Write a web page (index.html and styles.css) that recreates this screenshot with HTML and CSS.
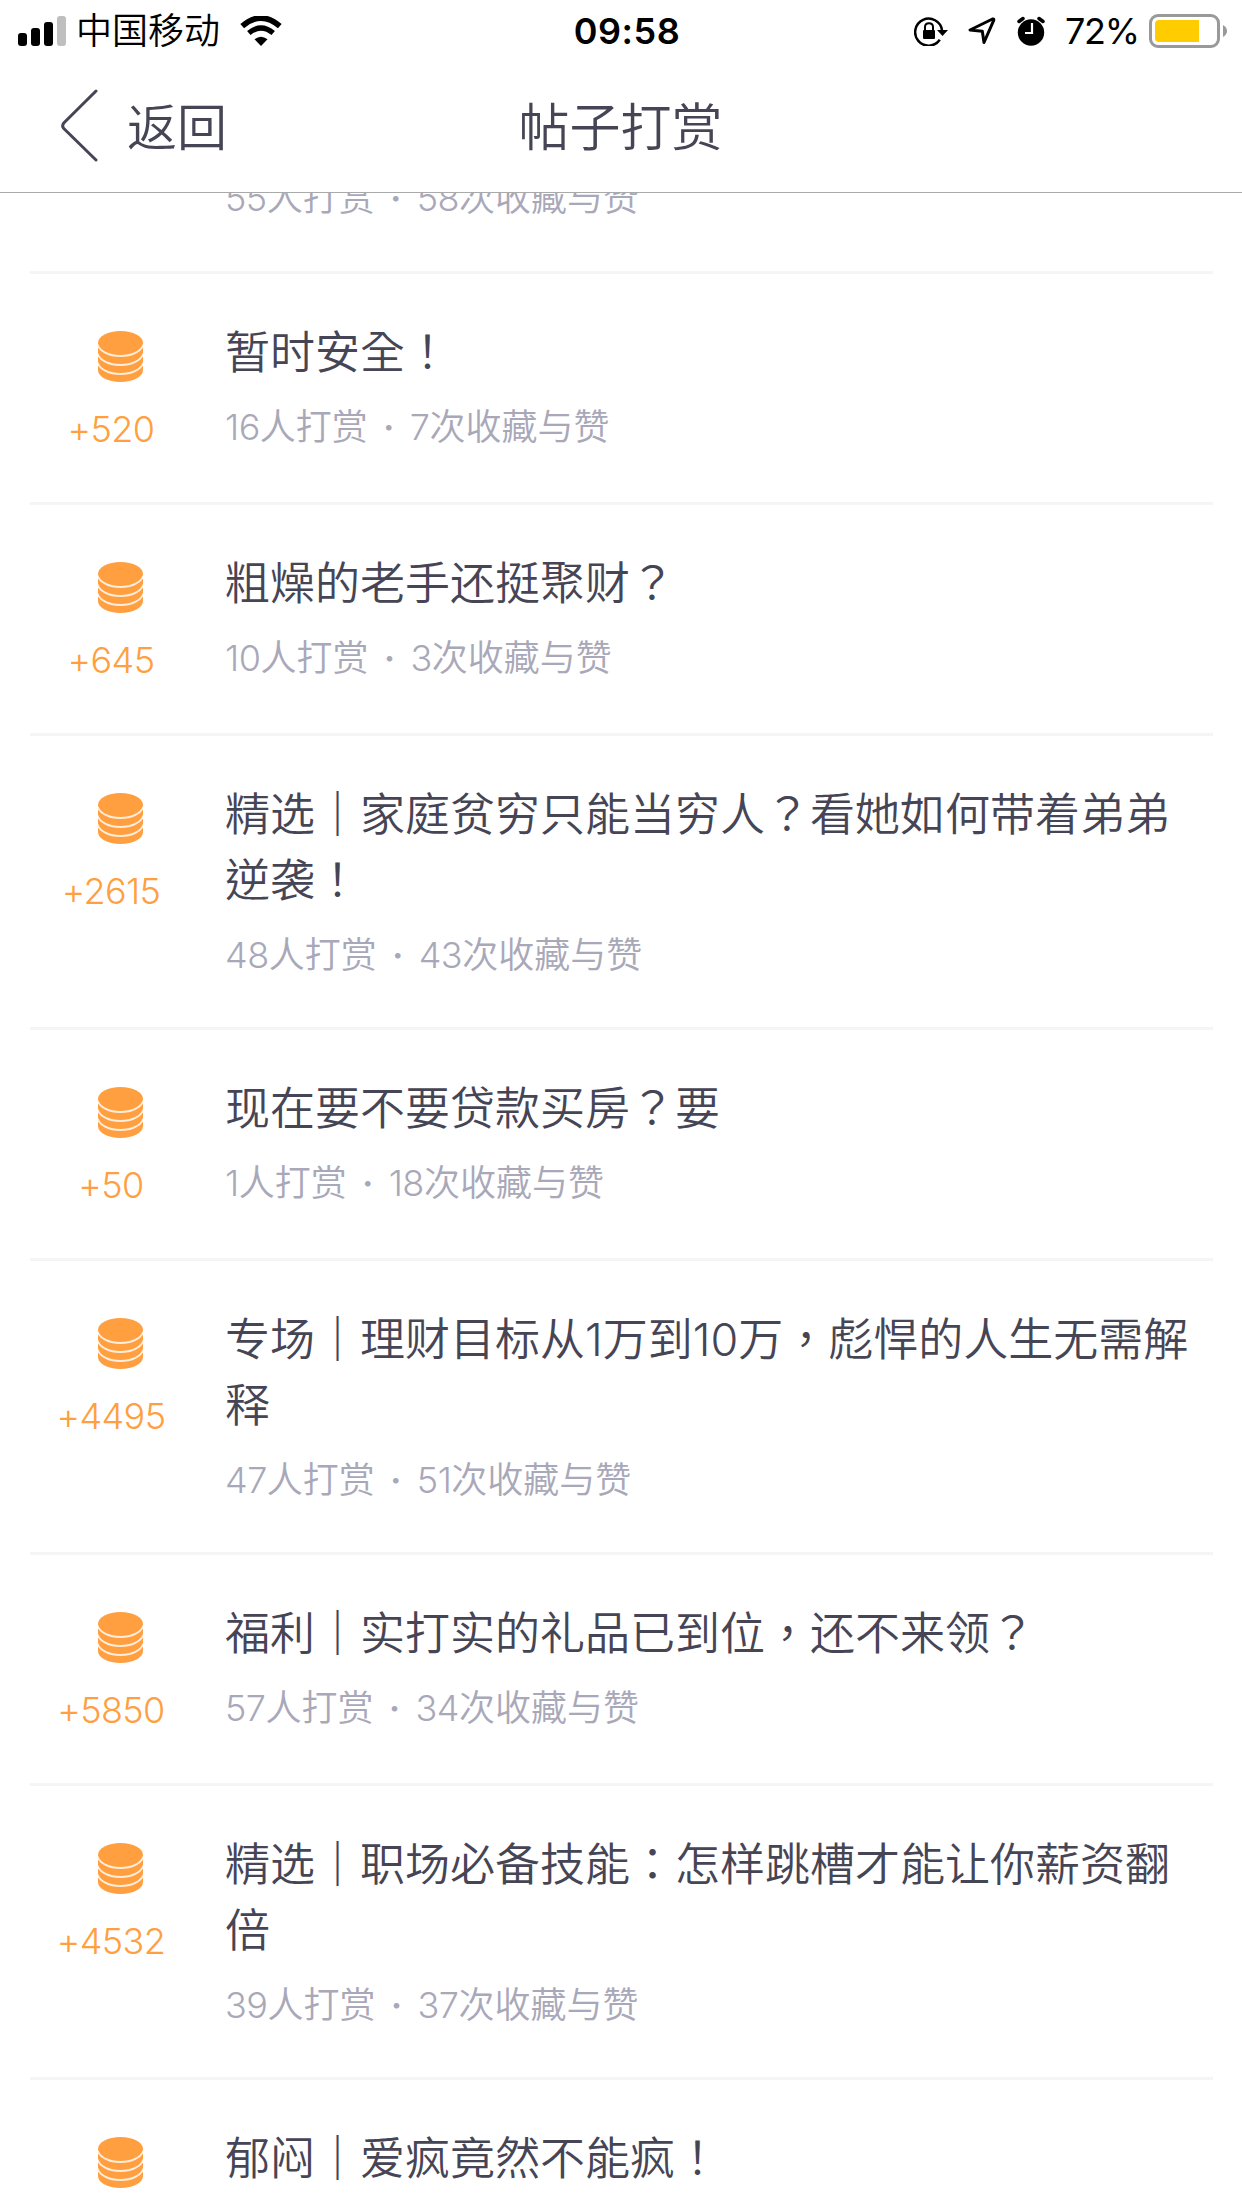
FILE: index.html
```html
<!DOCTYPE html>
<html lang="zh-CN">
<head>
<meta charset="utf-8">
<title>帖子打赏</title>
<link rel="stylesheet" href="styles.css">
</head>
<body>
<svg class="defs" width="0" height="0" aria-hidden="true">
  <symbol id="coins" viewBox="0 0 45 51">
    <path d="M0 12C0 5.400 10 0 22.500 0S45 5.400 45 12V39C45 45.600 35 51 22.500 51S0 45.600 0 39Z" fill="#ff9f40"/>
    <path d="M-.5 13.500C2 20.500 11 25 22.500 25S43 20.500 45.500 13.500M-.5 22.500C2 29.500 11 34 22.500 34S43 29.500 45.500 22.500M-.5 31.500C2 38.500 11 43 22.500 43S43 38.500 45.500 31.500" fill="none" stroke="#ffeedd" stroke-width="1.900"/>
  </symbol>
</svg>
<div class="screen">
  <div class="status">
    <div class="status-left">
      <svg class="signal" width="48" height="30" viewBox="0 0 48 30"><rect y="17" width="9" height="13" rx="3"/><rect x="13" y="12" width="9" height="18" rx="3"/><rect x="26" y="6" width="9" height="24" rx="3"/><rect x="39" width="9" height="30" rx="3" fill="#bfbfbf"/></svg>
      <span class="carrier">中国移动</span>
      <svg class="wifi" width="42" height="30" viewBox="0 0 42 30"><path d="M2.200 10.200Q21-6.200 39.800 10.200" fill="none" stroke="#000" stroke-width="5.600"/><path d="M8.800 17Q21 7 33.200 17" fill="none" stroke="#000" stroke-width="5.400"/><path d="M14.500 23.300Q21 18 27.500 23.300L21 30Z"/></svg>
    </div>
    <span class="time">09:58</span>
    <div class="status-right">
      <svg class="lock" width="34" height="30" viewBox="0 0 34 30"><path d="M25.800 23.800A13.500 13.500 0 1 1 28 14" fill="none" stroke="#000" stroke-width="2.500"/><path d="M23 14H34L28.500 20Z"/><rect x="9" y="14" width="12" height="9" rx="1"/><path d="M11 14V11Q11 7.200 15 7.200T19 11V14" fill="none" stroke="#000" stroke-width="2"/></svg>
      <svg class="arrow" width="28" height="28" viewBox="0 0 28 28"><path d="M2 13L24.500 2Q26.200 1.500 25.700 3.400L16 25.500L14.300 14.200Z" fill="none" stroke="#000" stroke-width="3" stroke-linejoin="round"/></svg>
      <svg class="alarm" width="28" height="30" viewBox="0 0 28 30"><circle cx="14" cy="16.500" r="13.200"/><path d="M2 5.500L6 2.500M22 2.500L26 5.500" stroke="#000" stroke-width="3.500" stroke-linecap="round"/><path d="M15 7V17H8" fill="none" stroke="#fff" stroke-width="2.200"/></svg>
      <span class="percent">72%</span>
      <svg class="battery" width="78" height="34" viewBox="0 0 78 34"><rect x="1.500" y="1.500" width="68" height="31" rx="7.500" fill="none" stroke="#999" stroke-width="3"/><path d="M10 6H50V28H10Q6 28 6 24V10Q6 6 10 6Z" fill="#fc0"/><path d="M74 11Q78 13.500 78 17T74 23Z" fill="#999"/></svg>
    </div>
  </div>
  <header class="nav">
    <div class="back"><svg width="37" height="74" viewBox="0 0 37 74"><path d="M35 2L2.800 34Q.5 37 2.800 39.500L35 71" fill="none" stroke="#464555" stroke-width="3" stroke-linecap="round"/></svg><span>返回</span></div>
    <h1>帖子打赏</h1>
  </header>
  <main class="list">
    <article class="row partial"><div class="body"><p class="meta"><b>55</b>人打赏<i>·</i><b>58</b>次收藏与赞</p></div></article>
    <article class="row"><div class="coin"><svg><use href="#coins"/></svg><span>+520</span></div><div class="body"><h2 lang="zh-TW">暂时安全！</h2><p class="meta"><b>16</b>人打赏<i>·</i><b>7</b>次收藏与赞</p></div></article>
    <article class="row"><div class="coin"><svg><use href="#coins"/></svg><span>+645</span></div><div class="body"><h2 lang="zh-TW">粗燥的老手还挺聚财？</h2><p class="meta"><b>10</b>人打赏<i>·</i><b>3</b>次收藏与赞</p></div></article>
    <article class="row"><div class="coin"><svg><use href="#coins"/></svg><span>+2615</span></div><div class="body"><h2 lang="zh-TW">精选<em>｜</em>家庭贫穷只能当穷人？看她如何带着弟弟逆袭！</h2><p class="meta"><b>48</b>人打赏<i>·</i><b>43</b>次收藏与赞</p></div></article>
    <article class="row"><div class="coin"><svg><use href="#coins"/></svg><span>+50</span></div><div class="body"><h2 lang="zh-TW">现在要不要贷款买房？要</h2><p class="meta"><b>1</b>人打赏<i>·</i><b>18</b>次收藏与赞</p></div></article>
    <article class="row"><div class="coin"><svg><use href="#coins"/></svg><span>+4495</span></div><div class="body"><h2 lang="zh-TW">专场<em>｜</em>理财目标从1万到10万，彪悍的人生无需解释</h2><p class="meta"><b>47</b>人打赏<i>·</i><b>51</b>次收藏与赞</p></div></article>
    <article class="row"><div class="coin"><svg><use href="#coins"/></svg><span>+5850</span></div><div class="body"><h2 lang="zh-TW">福利<em>｜</em>实打实的礼品已到位，还不来领？</h2><p class="meta"><b>57</b>人打赏<i>·</i><b>34</b>次收藏与赞</p></div></article>
    <article class="row"><div class="coin"><svg><use href="#coins"/></svg><span>+4532</span></div><div class="body"><h2 lang="zh-TW">精选<em>｜</em>职场必备技能：怎样跳槽才能让你薪资翻倍</h2><p class="meta"><b>39</b>人打赏<i>·</i><b>37</b>次收藏与赞</p></div></article>
    <article class="row"><div class="coin"><svg><use href="#coins"/></svg></div><div class="body"><h2 lang="zh-TW">郁闷<em>｜</em>爱疯竟然不能疯！</h2></div></article>
  </main>
</div>
</body>
</html>
```
FILE: styles.css
```css
* { box-sizing: border-box; }
body, h1, h2, p { margin: 0; }
body { background: #fff; color: #464555; font-family: Inter, "Noto Sans CJK SC", sans-serif; font-weight: 350; }
b, i, em { font-weight: inherit; font-style: normal; }
svg { display: block; flex: none; }
.defs { position: absolute; }
.screen { width: 1242px; height: 2208px; overflow: hidden; display: flex; flex-direction: column; }

.status { height: 60px; flex: none; display: grid; grid-template-columns: 1fr auto 1fr; padding: 0 15px 0 18px; color: #000; font-size: 36px; line-height: 60px; font-weight: 400; }
.status-left, .status-right { display: flex; align-items: center; }
.status-right { justify-content: flex-end; }
.carrier { margin: -5px 20px 0 10px; line-height: 60px; font-family: "Noto Sans CJK SC", sans-serif; font-weight: 350; }
.time { font-weight: 600; padding: 1px 0 0 5px; letter-spacing: .5px; margin-right: -4px; }
.lock { margin-right: 20px; }
.arrow { margin-right: 21px; }
.alarm { margin-right: 20px; }
.percent { font-family: Inter, sans-serif; margin-right: 10px; font-weight: 400; padding-top: 1px; letter-spacing: -1.2px; }

.nav { height: 133px; flex: none; border-bottom: 1px solid #aaa; display: grid; grid-template-columns: 1fr auto 1fr; align-items: center; font-family: "Noto Sans CJK SC", sans-serif; }
.nav h1 { font-size: 51px; font-weight: 350; line-height: 74px; margin: -4px 0 0 -1px; }
.back { display: flex; align-items: center; gap: 29px; padding-left: 61px; line-height: 74px; font-size: 50px; }
.back span { margin-top: -4px; }

.list { flex: 1; min-height: 0; overflow: hidden; padding: 0 29px 0 30px; }
.row { display: flex; gap: 30px; min-height: 231px; border-bottom: 3px solid #f5f5f5; padding: 46px 0 45px; }
.partial { min-height: 0; height: 81px; padding: 0 0 0 195px; }
.partial .meta { margin-top: -22px; }
.coin { width: 165px; flex: none; color: #ff9f40; font-size: 36px; line-height: 50px; display: flex; flex-direction: column; align-items: center; letter-spacing: -.6px; }
.coin svg { width: 45px; height: 51px; margin: 11px 0 22px 16px; }
.coin span { margin-left: -3px; }
.body { flex: 1; }
h2 { font-family: Inter, "Noto Sans CJK TC", sans-serif; font-size: 45px; line-height: 66px; font-weight: 350; }
h2 em { font-weight: 500; }
.meta { color: #a9a8b9; font-size: 36px; line-height: 54px; margin-top: 14px; white-space: nowrap; }
.meta i { display: inline-block; width: 42px; text-align: center; font-weight: 600; }
.meta b { letter-spacing: -.5px; }
```
